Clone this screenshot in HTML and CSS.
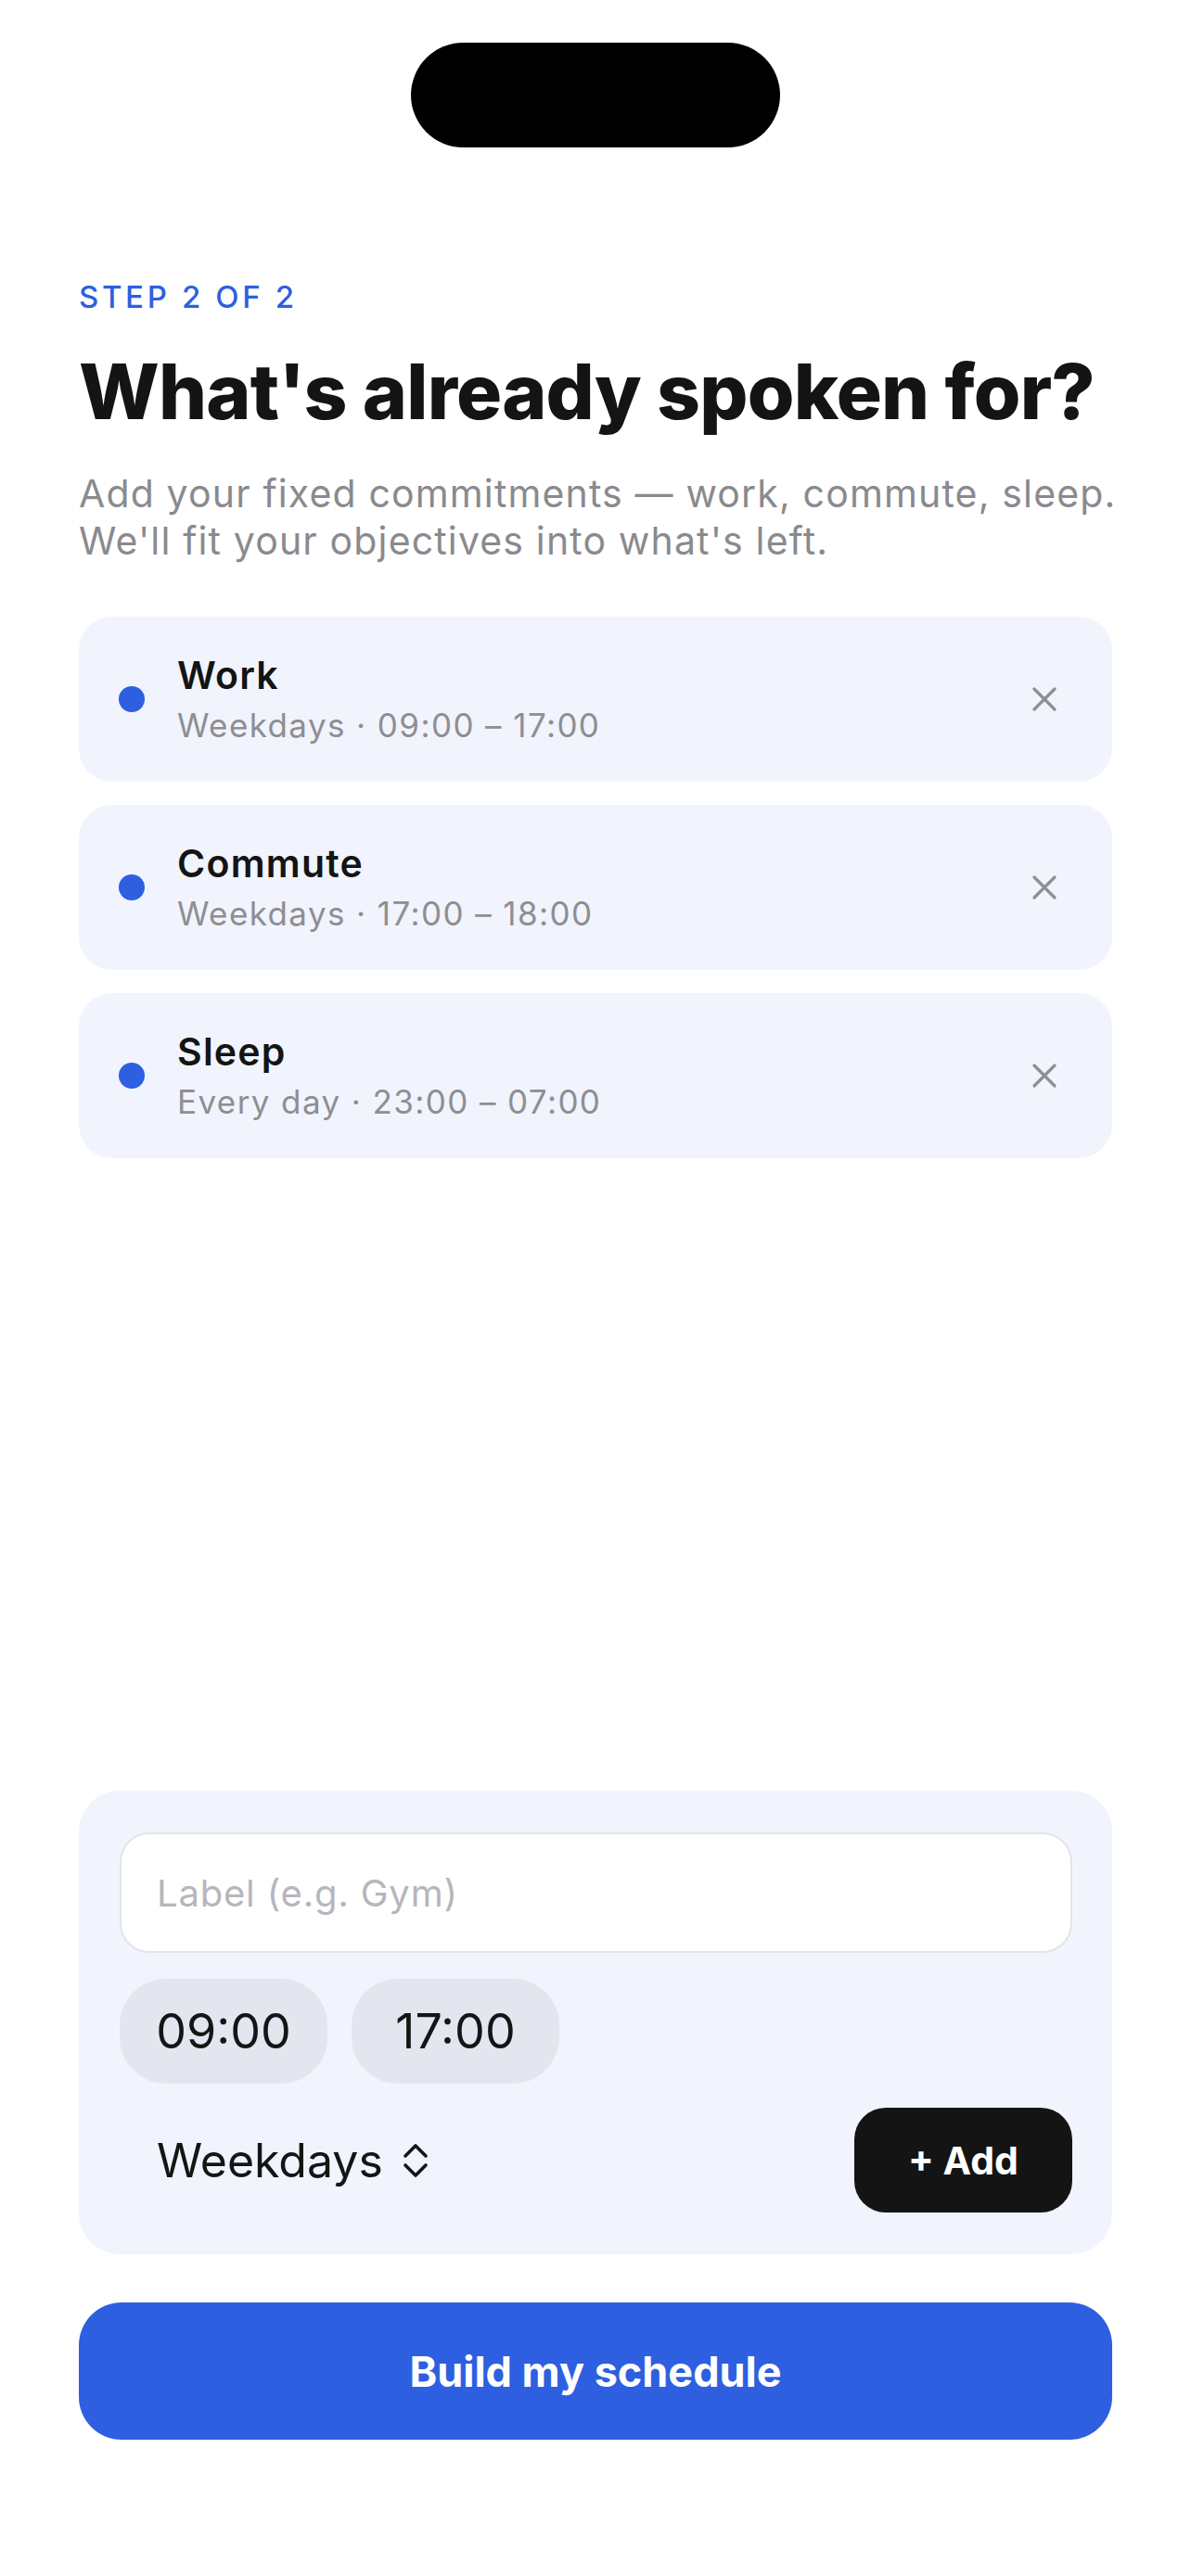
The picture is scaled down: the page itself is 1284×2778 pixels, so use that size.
FILE: index.html
```html
<!DOCTYPE html>
<html lang="en">
<head>
<meta charset="utf-8">
<title>What's already spoken for?</title>
<link rel="stylesheet" href="styles.css">
</head>
<body>
<div class="screen">
  <div class="island"></div>

  <header class="intro">
    <p class="step">STEP 2 OF 2</p>
    <h1 class="title">What's already spoken for?</h1>
    <p class="lead">Add your fixed commitments — work, commute, sleep.<br>We'll fit your objectives into what's left.</p>
  </header>

  <ul class="commitments">
    <li class="card">
      <span class="dot"></span>
      <div class="card-text">
        <div class="card-title">Work</div>
        <div class="card-sub">Weekdays · 09:00 – 17:00</div>
      </div>
      <button class="remove" aria-label="Remove">
        <svg viewBox="0 0 28 28" width="28" height="28"><path d="M3 3 L25 25 M25 3 L3 25" /></svg>
      </button>
    </li>
    <li class="card">
      <span class="dot"></span>
      <div class="card-text">
        <div class="card-title">Commute</div>
        <div class="card-sub">Weekdays · 17:00 – 18:00</div>
      </div>
      <button class="remove" aria-label="Remove">
        <svg viewBox="0 0 28 28" width="28" height="28"><path d="M3 3 L25 25 M25 3 L3 25" /></svg>
      </button>
    </li>
    <li class="card">
      <span class="dot"></span>
      <div class="card-text">
        <div class="card-title">Sleep</div>
        <div class="card-sub">Every day · 23:00 – 07:00</div>
      </div>
      <button class="remove" aria-label="Remove">
        <svg viewBox="0 0 28 28" width="28" height="28"><path d="M3 3 L25 25 M25 3 L3 25" /></svg>
      </button>
    </li>
  </ul>

  <div class="spacer"></div>

  <section class="composer">
    <input class="label-input" type="text" placeholder="Label (e.g. Gym)">
    <div class="times">
      <span class="pill">09:00</span>
      <span class="pill">17:00</span>
    </div>
    <div class="composer-row">
      <div class="days">
        <span>Weekdays</span>
        <svg class="updown" viewBox="0 0 30 40" width="30" height="40"><path d="M4 15 L15 4 L26 15 M4 25 L15 36 L26 25" /></svg>
      </div>
      <button class="add">+ Add</button>
    </div>
  </section>

  <button class="build">Build my schedule</button>
</div>
</body>
</html>
```

FILE: styles.css
```css
* { box-sizing: border-box; }

html, body {
  margin: 0;
  padding: 0;
  background: #ffffff;
}

body {
  font-family: Inter, "Noto Sans", "Liberation Sans", sans-serif;
  color: #111111;
}

.screen {
  min-height: 2778px;
  display: flex;
  flex-direction: column;
  padding: 46px 85px 147px;
}

.island {
  align-self: center;
  width: 398px;
  height: 113px;
  border-radius: 57px;
  background: #000000;
}

.intro {
  margin-top: 142px;
}

.step {
  margin: 0;
  font-size: 33px;
  line-height: 38px;
  font-weight: 500;
  letter-spacing: 0.11em;
  color: #2d5fe0;
}

.title {
  margin: 39px 0 0;
  font-size: 82px;
  line-height: 90px;
  font-weight: 800;
  letter-spacing: -0.01em;
  color: #141414;
}

.lead {
  margin: 39px 0 0;
  font-size: 41px;
  line-height: 51px;
  font-weight: 400;
  letter-spacing: 0.028em;
  white-space: nowrap;
  color: #8a8a8e;
}

.commitments {
  list-style: none;
  margin: 56px 0 0;
  padding: 0;
  display: flex;
  flex-direction: column;
  gap: 25px;
}

.card {
  display: flex;
  align-items: center;
  min-height: 178px;
  padding: 0 59px 0 43px;
  border-radius: 36px;
  background: #f1f4fd;
}

.dot {
  flex: none;
  width: 28px;
  height: 28px;
  border-radius: 50%;
  background: #2d5fe0;
}

.card-text {
  flex: 1;
  margin-left: 35px;
}

.card-title {
  font-size: 41px;
  line-height: 48px;
  font-weight: 600;
  letter-spacing: 0.03em;
  color: #141414;
}

.card-sub {
  margin-top: 8px;
  font-size: 35px;
  line-height: 44px;
  font-weight: 400;
  letter-spacing: 0.04em;
  color: #8e8e93;
}

.remove {
  flex: none;
  width: 28px;
  height: 28px;
  padding: 0;
  border: 0;
  background: none;
  display: flex;
}

.remove path {
  fill: none;
  stroke: #8e8e93;
  stroke-width: 3.2;
  stroke-linecap: round;
}

.spacer {
  flex: 1;
}

.composer {
  display: flex;
  flex-direction: column;
  padding: 45px 43px 45px 44px;
  border-radius: 44px;
  background: #f1f4fd;
}

.label-input {
  width: 100%;
  height: 130px;
  padding: 0 38px;
  border: 2px solid #e3e3e8;
  border-radius: 32px;
  background: #ffffff;
  font-family: inherit;
  font-size: 40px;
  letter-spacing: 0.02em;
  color: #111111;
  outline: none;
}

.label-input::placeholder {
  color: #b6b6bb;
}

.times {
  display: flex;
  gap: 26px;
  margin-top: 28px;
}

.pill {
  display: flex;
  align-items: center;
  justify-content: center;
  width: 224px;
  height: 113px;
  border-radius: 50px;
  background: #e3e6ee;
  font-size: 52px;
  color: #151515;
}

.composer-row {
  display: flex;
  align-items: center;
  justify-content: space-between;
  margin-top: 26px;
}

.days {
  display: flex;
  align-items: center;
  gap: 20px;
  padding-left: 40px;
  font-size: 50px;
  color: #151515;
}

.updown path {
  fill: none;
  stroke: #151515;
  stroke-width: 3.6;
  stroke-linecap: round;
  stroke-linejoin: round;
}

.add {
  width: 235px;
  height: 113px;
  border: 0;
  border-radius: 34px;
  background: #141414;
  color: #ffffff;
  font-family: inherit;
  font-size: 41px;
  font-weight: 700;
}

.build {
  margin-top: 52px;
  height: 148px;
  border: 0;
  border-radius: 46px;
  background: #2d5fe0;
  color: #ffffff;
  font-family: inherit;
  font-size: 45px;
  font-weight: 700;
}
```
